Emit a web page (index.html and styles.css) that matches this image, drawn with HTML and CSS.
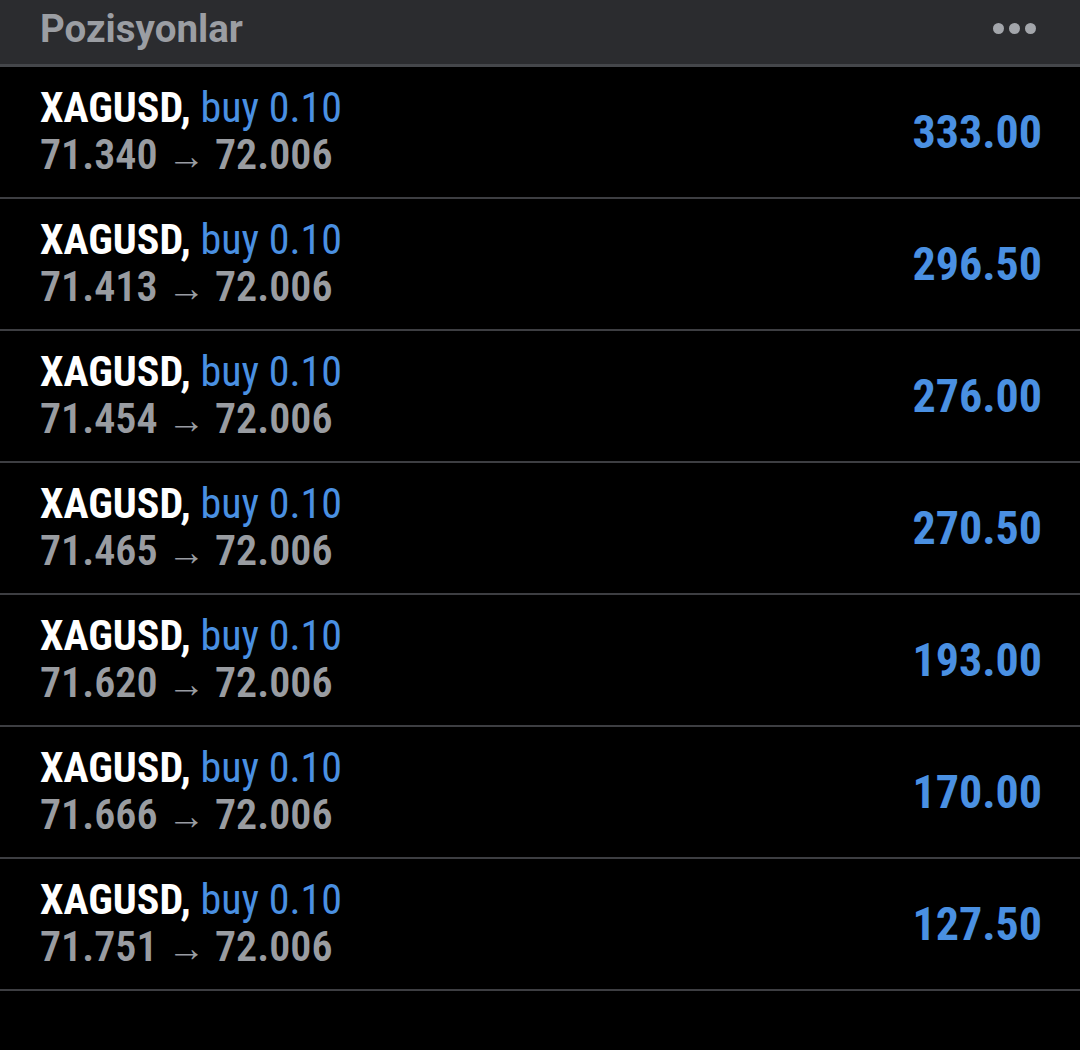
FILE: index.html
```html
<!DOCTYPE html>
<html lang="tr">
<head>
  <meta charset="UTF-8">
  <title>Pozisyonlar</title>
  <link rel="stylesheet" href="styles.css">
</head>
<body>
  <div class="header">
    <span class="title">Pozisyonlar</span>
    <span class="more"><i></i><i></i><i></i></span>
  </div>
  <div class="list">
    <div class="row">
      <div class="info">
        <div class="line1"><span class="sym">XAGUSD,</span> <span class="side">buy 0.10</span></div>
        <div class="line2">71.340 <span class="arrow">&rarr;</span> 72.006</div>
      </div>
      <div class="profit">333.00</div>
    </div>
    <div class="row">
      <div class="info">
        <div class="line1"><span class="sym">XAGUSD,</span> <span class="side">buy 0.10</span></div>
        <div class="line2">71.413 <span class="arrow">&rarr;</span> 72.006</div>
      </div>
      <div class="profit">296.50</div>
    </div>
    <div class="row">
      <div class="info">
        <div class="line1"><span class="sym">XAGUSD,</span> <span class="side">buy 0.10</span></div>
        <div class="line2">71.454 <span class="arrow">&rarr;</span> 72.006</div>
      </div>
      <div class="profit">276.00</div>
    </div>
    <div class="row">
      <div class="info">
        <div class="line1"><span class="sym">XAGUSD,</span> <span class="side">buy 0.10</span></div>
        <div class="line2">71.465 <span class="arrow">&rarr;</span> 72.006</div>
      </div>
      <div class="profit">270.50</div>
    </div>
    <div class="row">
      <div class="info">
        <div class="line1"><span class="sym">XAGUSD,</span> <span class="side">buy 0.10</span></div>
        <div class="line2">71.620 <span class="arrow">&rarr;</span> 72.006</div>
      </div>
      <div class="profit">193.00</div>
    </div>
    <div class="row">
      <div class="info">
        <div class="line1"><span class="sym">XAGUSD,</span> <span class="side">buy 0.10</span></div>
        <div class="line2">71.666 <span class="arrow">&rarr;</span> 72.006</div>
      </div>
      <div class="profit">170.00</div>
    </div>
    <div class="row">
      <div class="info">
        <div class="line1"><span class="sym">XAGUSD,</span> <span class="side">buy 0.10</span></div>
        <div class="line2">71.751 <span class="arrow">&rarr;</span> 72.006</div>
      </div>
      <div class="profit">127.50</div>
    </div>
  </div>
</body>
</html>
```
FILE: styles.css
```css
body {
  margin: 0;
  background-color: #000;
  font-family: Roboto, "Liberation Sans", sans-serif;
  height: 1050px;
  overflow: hidden;
}

.header {
  height: 67px;
  background-color: #2b2c2f;
  border-bottom: 3px solid #45474b;
  display: flex;
  align-items: center;
  justify-content: space-between;
  padding: 0 40px 8px 40px;
  box-sizing: border-box;
}

.title {
  color: #9b9ea3;
  font-size: 38.5px;
  font-weight: 700;
}

.more {
  display: flex;
  gap: 5px;
  margin-right: 4px;
}

.more i {
  width: 11px;
  height: 11px;
  border-radius: 50%;
  background-color: #a3a6ab;
}

.row {
  height: 130px;
  border-bottom: 2px solid #3d3e42;
  display: flex;
  align-items: center;
  justify-content: space-between;
  padding: 0 38px 0 40px;
}

.info {
  font-stretch: 75%;
  font-size: 42px;
  line-height: 47px;
}

.line1 {
  color: #fff;
}

.sym {
  font-weight: 700;
}

.side {
  color: #4a90e2;
}

.line2 {
  color: #999ca1;
  font-weight: 650;
}

.arrow {
  font-size: 38px;
  font-weight: 400;
}

.profit {
  color: #4a90e2;
  font-size: 46px;
  font-weight: 700;
  font-stretch: 75%;
}
```
